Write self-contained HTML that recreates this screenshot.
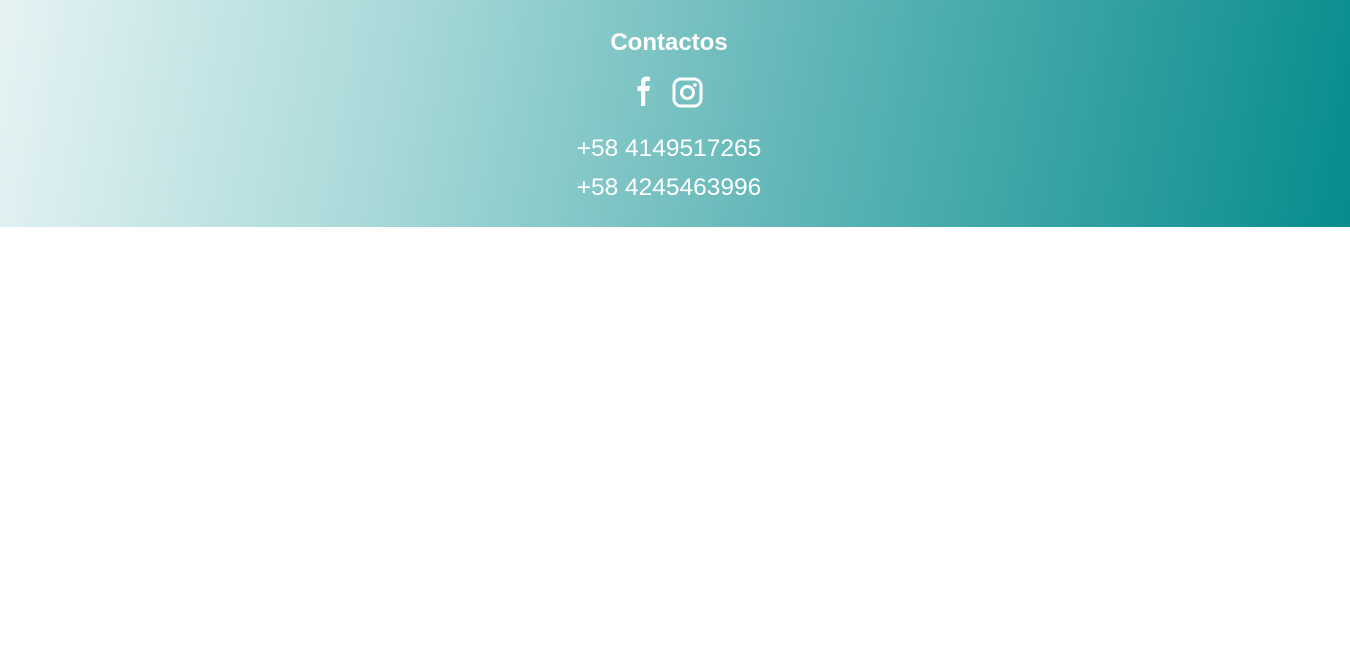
<!DOCTYPE html>
<html><head><style>
body{margin:0;width:1350px;height:650px;background:#fff;font-family:"Liberation Sans",sans-serif;}
.f{height:227px;background:linear-gradient(100deg,#e6f3f4 0%,#a7d8d8 30%,#5fb5b6 60%,#078c8e 100%);position:relative;color:#fff;text-align:center;}
.w{position:absolute;left:-6px;width:1350px;top:0;height:227px;}
h2{margin:0;position:absolute;top:29px;width:100%;font-size:24px;font-weight:bold;}
.ic{position:absolute;top:76px;left:0;width:100%;}
.p{position:absolute;width:100%;font-size:24.5px;font-weight:300;}
</style></head><body>
<div class="f"><div class="w">
<h2>Contactos</h2>
<div class="p" style="top:135px">+58 4149517265</div>
<div class="p" style="top:174px">+58 4245463996</div>
</div>
<div class="ic"><svg width="1350" height="34">
<path d="M641 30 V15 h-3.5 V10 H641 V6 c0-3.5 2-5.5 5.5-5.5 c1.5 0 2.5.1 3.5.3 V5 h-2.5 c-1.8 0-2.3 1-2.3 2.5 V10 h4.8 l-.8 5 h-4 V30 Z" fill="#fff"/>
<rect x="674" y="3" width="27" height="27" rx="7" fill="none" stroke="#fff" stroke-width="3"/>
<circle cx="687.5" cy="16.5" r="6" fill="none" stroke="#fff" stroke-width="3"/>
<circle cx="695" cy="9" r="1.8" fill="#fff"/>
</svg></div>
</div>
</body></html>
